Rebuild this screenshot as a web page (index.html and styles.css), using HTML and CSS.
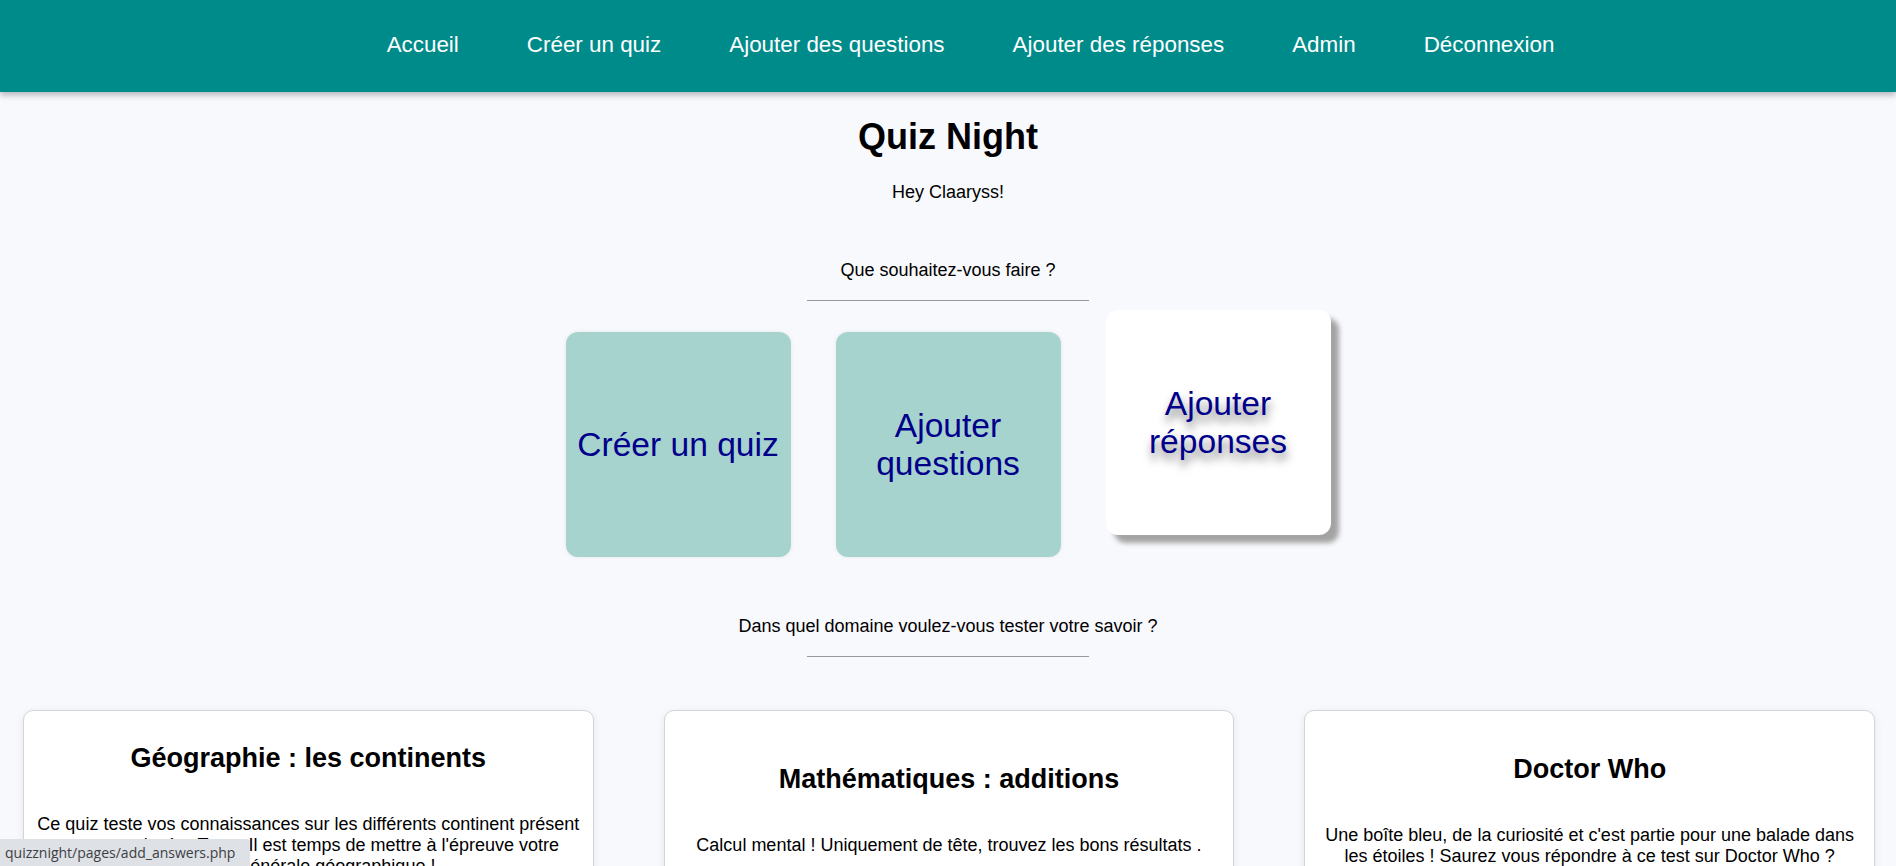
FILE: index.html
```html
<!DOCTYPE html>
<html lang="fr">
<head>
<meta charset="utf-8">
<title>Quiz Night</title>
<link rel="stylesheet" href="styles.css">
</head>
<body>
<header class="site-header">
  <nav>
    <ul class="nav-list">
      <li><a href="#">Accueil</a></li>
      <li><a href="#">Créer un quiz</a></li>
      <li><a href="#">Ajouter des questions</a></li>
      <li><a href="#">Ajouter des réponses</a></li>
      <li><a href="#">Admin</a></li>
      <li><a href="#">Déconnexion</a></li>
    </ul>
  </nav>
</header>
<main class="page">
  <h1 class="page-title">Quiz Night</h1>
  <p class="greeting">Hey Claaryss!</p>
  <p class="section-question">Que souhaitez-vous faire ?</p>
  <div class="divider"></div>
  <div class="actions">
    <a class="action-card" href="#">Créer un quiz</a>
    <a class="action-card" href="#">Ajouter questions</a>
    <a class="action-card is-hovered" href="#">Ajouter réponses</a>
  </div>
  <p class="section-question section-question--second">Dans quel domaine voulez-vous tester votre savoir ?</p>
  <div class="divider"></div>
  <section class="quiz-grid">
    <article class="quiz-card">
      <h2 class="quiz-title">Géographie : les continents</h2>
      <p class="quiz-desc">Ce quiz teste vos connaissances sur les différents continent présent sur notre planète Terre. Il est temps de mettre à l'épreuve votre culture générale géographique !</p>
    </article>
    <article class="quiz-card">
      <h2 class="quiz-title">Mathématiques : additions</h2>
      <p class="quiz-desc">Calcul mental ! Uniquement de tête, trouvez les bons résultats .</p>
    </article>
    <article class="quiz-card">
      <h2 class="quiz-title">Doctor Who</h2>
      <p class="quiz-desc">Une boîte bleu, de la curiosité et c'est partie pour une balade dans les étoiles ! Saurez vous répondre à ce test sur Doctor Who ?</p>
    </article>
  </section>
</main>
<div class="status-bar">quizznight/pages/add_answers.php</div>
</body>
</html>
```

FILE: styles.css
```css
* {
  box-sizing: border-box;
}

html, body {
  margin: 0;
  padding: 0;
}

body {
  background: #f8f9fd;
  font-family: "Liberation Sans", Arial, sans-serif;
  font-size: 18px;
  color: #000;
  overflow: hidden;
}

.site-header {
  height: 92px;
  padding-bottom: 2px;
  background: #008b8b;
  box-shadow: 0 3px 6px rgba(0, 0, 0, 0.28);
  display: flex;
  align-items: center;
  position: relative;
  z-index: 2;
}

.site-header nav {
  width: 100%;
}

.nav-list {
  list-style: none;
  margin: 0;
  padding: 0 0 0 45px;
  display: flex;
  justify-content: center;
}

.nav-list li {
  margin: 0 34px;
}

.nav-list a {
  color: #fff;
  text-decoration: none;
  font-size: 22.4px;
}

.page {
  display: flex;
  flex-direction: column;
  align-items: center;
}

.page-title {
  font-size: 36px;
  font-weight: bold;
  margin: 24px 0 0;
}

.greeting {
  margin: 24px 0 0;
}

.section-question {
  margin: 57px 0 0;
}

.section-question--second {
  margin-top: 59px;
}

.divider {
  width: 282px;
  border-top: 1px solid #9a9a9a;
  margin-top: 19px;
}

.actions {
  display: flex;
  gap: 45px;
  margin-top: 31px;
}

.action-card {
  width: 225px;
  height: 225px;
  background: #a7d3ce;
  border-radius: 12px;
  display: flex;
  align-items: center;
  justify-content: center;
  text-align: center;
  color: #00008b;
  font-size: 33.6px;
  text-decoration: none;
  box-shadow: 0 0 4px rgba(0, 0, 0, 0.08);
}

.action-card.is-hovered {
  background: #fff;
  transform: translateY(-22px);
  box-shadow: 8px 8px 5px #a3a3a3;
  text-shadow: 1px 7px 8px rgba(0, 0, 0, 0.5);
}

.quiz-grid {
  align-self: stretch;
  display: grid;
  grid-template-columns: repeat(3, 1fr);
  gap: 70px;
  padding: 0 21px 0 23px;
  margin-top: 53px;
}

.quiz-card {
  height: 196px;
  background: #fff;
  border: 1px solid #d4d4d8;
  border-radius: 10px;
  box-shadow: 0 2px 8px rgba(0, 0, 0, 0.08);
  display: flex;
  flex-direction: column;
  justify-content: center;
  text-align: center;
  padding: 0 10px;
}

.quiz-title {
  font-size: 27px;
  margin: 22.4px 0;
}

.quiz-desc {
  margin: 18px 0;
  flex-shrink: 0;
}

.status-bar {
  position: fixed;
  left: 0;
  bottom: 0;
  width: 250px;
  height: 27px;
  background: #dee1e6;
  border-top-right-radius: 4px;
  color: #3c4043;
  font-family: "Open Sans", "DejaVu Sans", sans-serif;
  font-size: 14px;
  line-height: 27px;
  padding-left: 5px;
  white-space: nowrap;
  overflow: hidden;
  z-index: 5;
}
```
